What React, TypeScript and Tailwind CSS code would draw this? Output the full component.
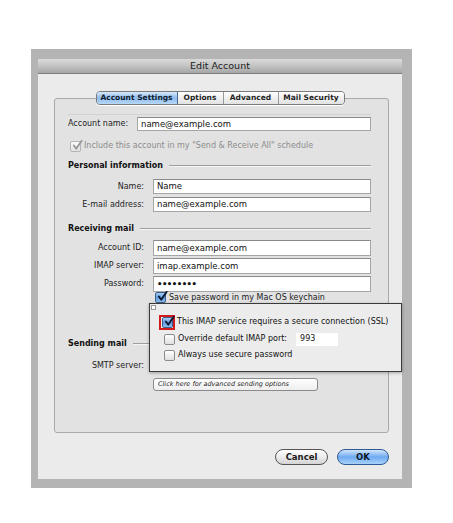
import type { ReactNode } from "react";

const font = { fontFamily: '"DejaVu Sans", "Liberation Sans", sans-serif' };

function Checkbox({ checked, disabled }: { checked?: boolean; disabled?: boolean }) {
  if (checked) {
    return (
      <div
        className={`relative w-[11px] h-[11px] shrink-0 rounded-[2px] border ${
          disabled
            ? "border-[#b5b5b5] bg-gradient-to-b from-[#fafafa] to-[#e3e3e3]"
            : "border-[#3e5f8c] bg-gradient-to-b from-[#a9cdf2] via-[#5f9be0] to-[#8fc0f0]"
        }`}
      >
        <svg viewBox="0 0 12 12" className="absolute -top-[3px] left-[1px] w-[11px] h-[12px]">
          <path
            d="M2 6.5 L4.6 10 L10.5 1.5"
            fill="none"
            stroke={disabled ? "#9a9a9a" : "#0b1a33"}
            strokeWidth="2"
            strokeLinecap="round"
            strokeLinejoin="round"
          />
        </svg>
      </div>
    );
  }
  return (
    <div className="w-[11px] h-[11px] shrink-0 rounded-[2px] border border-[#8c8c8c] bg-gradient-to-b from-[#ffffff] to-[#e0e0e0]" />
  );
}

function Input({ value, className = "" }: { value: string; className?: string }) {
  return (
    <div
      className={`flex items-center bg-white border border-[#a5a5a5] border-t-[#8a8a8a] px-[3px] text-[8.5px] text-[#111] ${className}`}
    >
      {value}
    </div>
  );
}

function Row({ label, children, h }: { label: string; children: ReactNode; h: string }) {
  return (
    <div className={`flex items-center ${h}`}>
      <div className="w-[77px] text-right pr-px text-[8px] text-[#222]">{label}</div>
      <div className="flex-1 pl-[8px] h-full">{children}</div>
    </div>
  );
}

function Header({ title }: { title: string }) {
  return (
    <div className="flex items-center h-[12px]">
      <span className="font-bold text-[8px] text-[#111]">{title}</span>
      <div className="flex-1 ml-[6px] h-px bg-[#9e9e9e] border-b border-[#f5f5f5] box-content" />
    </div>
  );
}

const tabs = [
  { label: "Account Settings", w: "w-[81px]", active: true },
  { label: "Options", w: "w-[46px]" },
  { label: "Advanced", w: "w-[55px]" },
  { label: "Mail Security", w: "w-[65px]" },
];

export default function App() {
  return (
    <div className="w-[453px] h-[523px] bg-white pt-[49px] pl-[31px]" style={font}>
      <div className="w-[381px] h-[439px] bg-[#b4b4b4] pl-[7px] pr-[10px] pt-[10px]">
        <div className="relative w-[364px] h-[420px] bg-[#ebebeb] flex flex-col">
          {/* Title bar */}
          <div className="h-[15px] flex items-center justify-center bg-gradient-to-b from-[#dadada] via-[#c3c3c3] to-[#a6a6a6] border-b border-[#7c7c7c] text-[9.5px] text-[#1c1c1c]">
            Edit Account
          </div>

          <div className="flex flex-col pt-[24px] pl-[16px] pr-[13px]">
            {/* Tab box */}
            <div className="h-[335px] border border-[#a9a9a9] rounded-[3px] bg-[#e2e2e2] pl-[13px] pr-[17px] flex flex-col">
              <div className="flex justify-center -mt-[8px] h-[14px] pl-[1px]">
                <div className="flex rounded-[4px] border border-[#7a7a7a] overflow-hidden shadow-[0_1px_0_#ffffff]">
                  {tabs.map((t, i) => (
                    <div
                      key={t.label}
                      className={`${t.w} flex items-center justify-center text-[7.5px] font-bold ${
                        t.active
                          ? "bg-gradient-to-b from-[#d8e9fb] via-[#8ebbec] to-[#b7d8f8] text-[#0d1a2c] border-r border-[#4a6c96]"
                          : `bg-gradient-to-b from-[#ffffff] via-[#f0f0f0] to-[#e2e2e2] text-[#1f1f1f] ${
                              i < tabs.length - 1 ? "border-r border-[#9a9a9a]" : ""
                            }`
                      }`}
                    >
                      {t.label}
                    </div>
                  ))}
                </div>
              </div>

              <div className="mt-[9px] h-px bg-[#d2d2d2]" />

              {/* Account name */}
              <div className="flex items-center h-[14px] mt-[2px]">
                <div className="w-[69px] text-[8px] text-[#222]">Account name:</div>
                <Input value="name@example.com" className="flex-1 h-full" />
              </div>

              <div className="flex items-center h-[12px] mt-[9px] pl-[2px]">
                <Checkbox checked disabled />
                <span className="ml-[3px] text-[8px] text-[#8c8c8c]">
                  Include this account in my "Send &amp; Receive All" schedule
                </span>
              </div>

              <div className="mt-[8px]">
                <Header title="Personal information" />
              </div>
              <div className="mt-[7px]">
                <Row label="Name:" h="h-[15px]">
                  <Input value="Name" className="h-full" />
                </Row>
              </div>
              <div className="mt-[3px]">
                <Row label="E-mail address:" h="h-[15px]">
                  <Input value="name@example.com" className="h-full" />
                </Row>
              </div>

              <div className="mt-[11px]">
                <Header title="Receiving mail" />
              </div>
              <div className="mt-[5px] flex flex-col gap-[2px]">
                <Row label="Account ID:" h="h-[16px]">
                  <Input value="name@example.com" className="h-full" />
                </Row>
                <Row label="IMAP server:" h="h-[16px]">
                  <Input value="imap.example.com" className="h-full" />
                </Row>
                <Row label="Password:" h="h-[16px]">
                  <Input value="••••••••" className="h-full tracking-[-0.5px] font-bold" />
                </Row>
              </div>
              <div className="flex items-center h-[11px] pl-[87px]">
                <Checkbox checked />
                <span className="ml-[3px] text-[8px] text-[#1a1a1a]">Save password in my Mac OS keychain</span>
              </div>

              <div className="mt-[35px]">
                <Header title="Sending mail" />
              </div>
              <div className="mt-[10px]">
                <Row label="SMTP server:" h="h-[12px]">
                  <Input value="smtp.example.com" className="h-full" />
                </Row>
              </div>
              <div className="mt-[6px] pl-[85px]">
                <div className="w-[165px] h-[13px] flex items-center pl-[4px] rounded-[3px] border border-[#8a8a8a] bg-gradient-to-b from-[#ffffff] to-[#eeeeee] text-[6.5px] italic text-[#222]">
                  Click here for advanced sending options
                </div>
              </div>
            </div>

            {/* Buttons */}
            <div className="flex justify-end gap-[9px] mt-[16px] h-[16px]">
              <div className="w-[53px] h-full rounded-full border border-[#555] bg-gradient-to-b from-[#ffffff] via-[#ececec] to-[#d4d4d4] flex items-center justify-center text-[8.5px] font-bold text-[#1a1a1a]">
                Cancel
              </div>
              <div className="w-[52px] h-full rounded-full border border-[#2f5a94] bg-gradient-to-b from-[#d2e6fb] via-[#6eaaf0] to-[#a9d2fa] flex items-center justify-center text-[8.5px] font-bold text-[#0d1a2c]">
                OK
              </div>
            </div>
          </div>

          {/* SSL callout overlay */}
          <div className="absolute left-[111px] top-[244px] right-0 h-[69px] bg-[#ececec] border border-[#3a3a3a] shadow-[0_1px_3px_rgba(0,0,0,0.3)]">
            <div className="absolute left-[1px] top-[1px] w-[5px] h-[5px] border border-[#9a9a9a] bg-white" />
            <div className="flex flex-col pt-[11px] pl-[9px]">
              <div className="flex items-center h-[14px]">
                <div className="w-[16px] h-[15px] border-2 border-[#d21a1a] flex items-center justify-center">
                  <Checkbox checked />
                </div>
                <span className="ml-[2px] text-[8px] text-[#111]">
                  This IMAP service requires a secure connection (SSL)
                </span>
              </div>
              <div className="flex items-center h-[14px] mt-[3px] pl-[5px]">
                <Checkbox />
                <span className="ml-[3px] text-[8px] text-[#111]">Override default IMAP port:</span>
                <div className="ml-[9px] w-[42px] h-[13px] bg-white flex items-center pl-[4px] text-[8px] text-[#111]">993</div>
              </div>
              <div className="flex items-center h-[14px] mt-[2px] pl-[5px]">
                <Checkbox />
                <span className="ml-[3px] text-[8px] text-[#111]">Always use secure password</span>
              </div>
            </div>
          </div>
        </div>
      </div>
    </div>
  );
}
